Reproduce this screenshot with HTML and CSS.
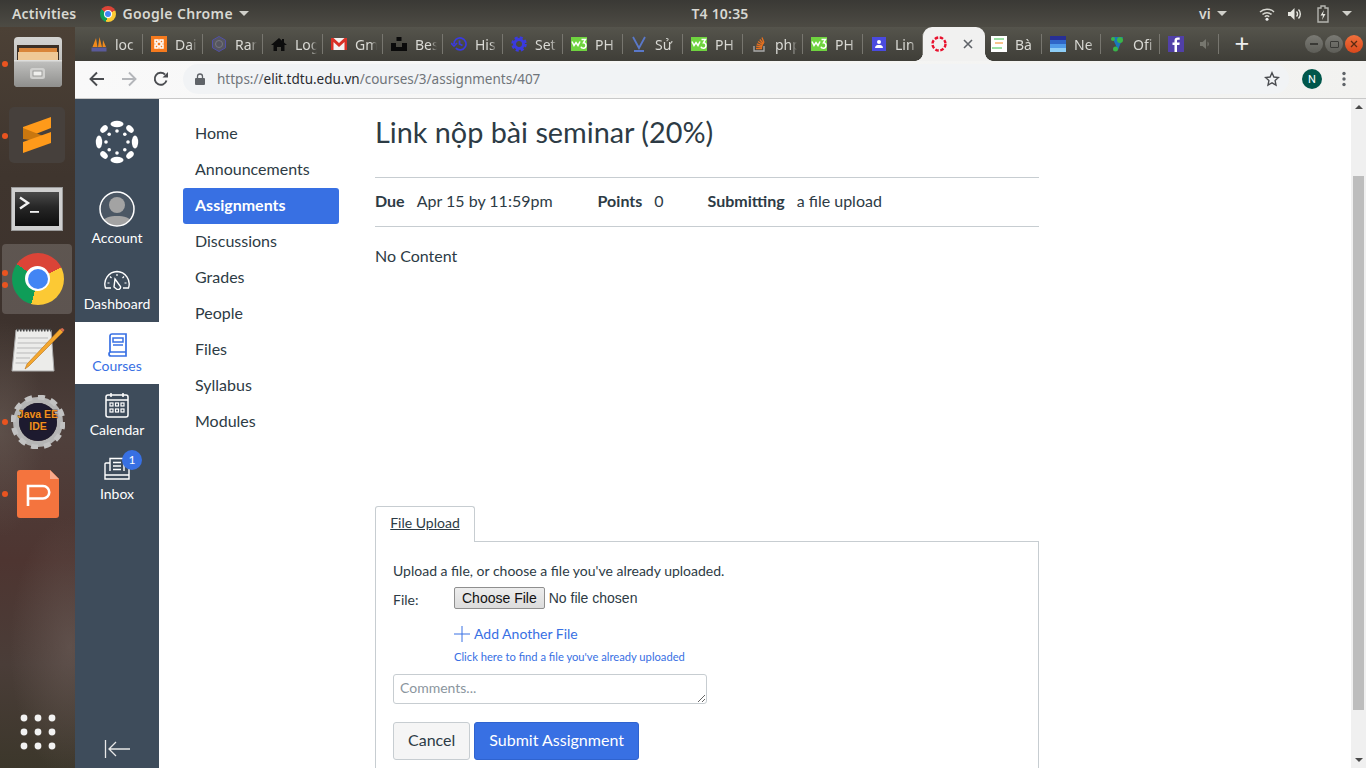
FILE: index.html
```html
<!DOCTYPE html>
<html lang="vi">
<head>
<meta charset="utf-8">
<title>Link nộp bài seminar (20%)</title>
<link rel="stylesheet" href="styles.css">
</head>
<body>
<svg class="defs" width="0" height="0" aria-hidden="true">
  <defs>
    <linearGradient id="cab-top" x1="0" y1="0" x2="0" y2="1"><stop offset="0" stop-color="#d4d4d2"/><stop offset="1" stop-color="#a9a9a7"/></linearGradient>
    <linearGradient id="cab-front" x1="0" y1="0" x2="0" y2="1"><stop offset="0" stop-color="#c2c2c0"/><stop offset="1" stop-color="#8f8f8d"/></linearGradient>
    <linearGradient id="term-bg" x1="0" y1="0" x2="0" y2="1"><stop offset="0" stop-color="#4a4a4a"/><stop offset=".45" stop-color="#262626"/><stop offset="1" stop-color="#0e0e0e"/></linearGradient>
  </defs>
  <symbol id="w3" viewBox="0 0 16 16">
    <rect width="16" height="14" y="1" fill="#6fd43f"/>
    <path d="M1 5.500l2 4 2-3 2 3 2-4" fill="none" stroke="#fff" stroke-width="1.500"/>
    <path d="M10.500 3.500h4l-2 3.200c2 0 2.500 1.200 2.500 2.800s-1 2.700-2.500 2.700-2.300-.6-2.600-1.500" fill="none" stroke="#fff" stroke-width="1.500"/>
  </symbol>
</svg>

<div class="screen">
  <header class="topbar">
    <div class="top-left">
      <span class="activities">Activities</span>
      <span class="chrome-logo chrome-logo-sm"><span class="chrome-ring"><span class="chrome-dot"></span></span></span>
      <span class="app-name">Google Chrome</span>
      <span class="caret"></span>
    </div>
    <div class="clock">T4 10:35</div>
    <div class="top-right">
      <span class="lang">vi</span>
      <span class="caret"></span>
      <svg class="tray wifi" width="16" height="14" viewBox="0 0 16 14"><path d="M1 5a10 10 0 0 1 14 0M3.500 7.500a6.500 6.500 0 0 1 9 0M5.800 9.800a3.200 3.200 0 0 1 4.400 0" fill="none" stroke="#d6d6d0" stroke-width="1.500"/><circle cx="8" cy="12.300" r="1.500" fill="#eee"/></svg>
      <svg class="tray sound" width="16" height="14" viewBox="0 0 16 14"><path d="M1 5h2.500L7.500 1v12l-4-4H1z" fill="#e6e6e0"/><path d="M9.500 4.500a3.500 3.500 0 0 1 0 5M11.500 2.500a6.500 6.500 0 0 1 0 9" fill="none" stroke="#e6e6e0" stroke-width="1.400"/></svg>
      <svg class="tray battery" width="12" height="18" viewBox="0 0 12 18"><path d="M4 1h4v2h3v14H1V3h3z" fill="none" stroke="#b5b5b0" stroke-width="1.400"/><path d="M7 5L3.500 10.500H6L5 15l3.500-6H6z" fill="#e6e6e0"/></svg>
      <span class="caret"></span>
    </div>
  </header>

  <div class="desk">
    <nav class="dock">
      <div class="dock-item dock-files"><span class="run-dot"></span>
        <svg width="50" height="50" viewBox="0 0 50 50"><rect x="1" y="0" width="48" height="50" rx="4" fill="url(#cab-top)"/><rect x="4" y="8" width="42" height="15" fill="#3b2f25"/><rect x="6" y="11" width="38" height="4" fill="#d9853a"/><rect x="5" y="15" width="40" height="8" fill="#efc896"/><path d="M1 23h48v23a4 4 0 0 1-4 4H5a4 4 0 0 1-4-4z" fill="url(#cab-front)"/><rect x="1" y="23" width="48" height="1.500" fill="#dededc"/><rect x="17" y="31" width="15" height="11" rx="2.500" fill="#d0d0ce"/><rect x="20" y="34" width="9" height="5" fill="#efefed" stroke="#8a8a88" stroke-width=".8"/></svg>
      </div>
      <div class="dock-item dock-sublime"><span class="run-dot"></span>
        <svg width="56" height="56" viewBox="0 0 56 56"><rect width="56" height="56" rx="5" fill="#46403c"/><path d="M14 20L42 10v11L14 32z" fill="#ff9a1a"/><path d="M14 21l28 11v4L14 32z" fill="#c9770f"/><path d="M42 25L14 35v11l28-10z" fill="#ff9a1a"/></svg>
      </div>
      <div class="dock-item dock-term">
        <svg width="52" height="44" viewBox="0 0 52 44"><rect x=".5" y=".5" width="51" height="43" fill="#cfcfcf" stroke="#9a9a9a"/><rect x="4" y="5" width="44" height="34" fill="url(#term-bg)"/><path d="M9 10.500l8 5.500-8 5.500" fill="none" stroke="#f2f2f2" stroke-width="2.400"/><rect x="19" y="24" width="9" height="1.800" fill="#f2f2f2"/></svg>
      </div>
      <div class="dock-item dock-active"><span class="run-dot run-dot-a"></span><span class="run-dot run-dot-b"></span>
        <span class="chrome-logo chrome-logo-lg"><span class="chrome-ring"><span class="chrome-dot"></span></span></span>
      </div>
      <div class="dock-item">
        <svg width="54" height="48" viewBox="0 0 54 48"><path d="M5 3h35l3 41H1z" fill="#ececea" stroke="#aaa"/><path d="M6 3h34" stroke="#444" stroke-width="3" stroke-dasharray="1.500 1.500"/><path d="M7 11h30M6.500 16h31M6 21h26M5.500 26h20M5 31h14M4.500 36h12" stroke="#b9b9b9"/><path d="M52 5L18 39l-4 3 2-5L49 2z" fill="#f4a72e" stroke="#b5701a" stroke-width=".6"/><path d="M49 2l3 3 1.500-2-2-2z" fill="#d56c50"/></svg>
      </div>
      <div class="dock-item"><span class="run-dot"></span>
        <svg width="54" height="54" viewBox="0 0 54 54"><circle cx="27" cy="27" r="22" fill="none" stroke="#b5b5b5" stroke-width="6"/><circle cx="27" cy="27" r="25" fill="none" stroke="#c2c2c2" stroke-width="5" stroke-dasharray="7 6"/><circle cx="27" cy="27" r="19" fill="#1d1a2f"/><text class="java-text" x="27" y="23">Java EE</text><text class="java-text" x="27" y="35">IDE</text></svg>
      </div>
      <div class="dock-item"><span class="run-dot"></span>
        <svg width="42" height="48" viewBox="0 0 42 48"><path d="M3 0h30l9 9v36a3 3 0 0 1-3 3H3a3 3 0 0 1-3-3V3a3 3 0 0 1 3-3z" fill="#f4743e"/><path d="M33 0l9 9h-9z" fill="#f9a98a"/><path d="M11 36V16h15a6 6 0 0 1 0 12.500H12" fill="none" stroke="#fff" stroke-width="2.600"/></svg>
      </div>
      <div class="dock-grid">
        <svg width="36" height="36" viewBox="0 0 36 36" fill="#f2f2f2"><circle cx="4" cy="4" r="3.400"/><circle cx="18" cy="4" r="3.400"/><circle cx="32" cy="4" r="3.400"/><circle cx="4" cy="18" r="3.400"/><circle cx="18" cy="18" r="3.400"/><circle cx="32" cy="18" r="3.400"/><circle cx="4" cy="32" r="3.400"/><circle cx="18" cy="32" r="3.400"/><circle cx="32" cy="32" r="3.400"/></svg>
      </div>
    </nav>

    <div class="browser">
      <div class="tabstrip">
        <div class="tab"><svg class="fav" viewBox="0 0 16 16"><path d="M1.500 11L5 2l1.500 9zM7 11l1.500-10 2.500 10zM11.500 11L12 4l3 7z" fill="#f08a1d"/><rect x=".5" y="11.500" width="15" height="4" fill="#5a5a9a"/></svg><span class="tab-title">loc</span></div>
        <div class="tab"><svg class="fav" viewBox="0 0 16 16"><rect width="16" height="16" fill="#f57a1e"/><path d="M4 4h3v2h2V4h3v3h-2v2h2v3H9v-2H7v2H4V9h2V7H4z" fill="none" stroke="#fff" stroke-width="1.500"/></svg><span class="tab-title">Dai</span></div>
        <div class="tab"><svg class="fav" viewBox="0 0 16 16"><path d="M8 .5l6.500 3.700v7.600L8 15.500l-6.500-3.700V4.200z" fill="#55555f" stroke="#5150a8"/><circle cx="8" cy="8" r="3.500" fill="none" stroke="#77777f"/></svg><span class="tab-title">Ran</span></div>
        <div class="tab"><svg class="fav" viewBox="0 0 16 16"><path d="M8 2L0 9h2.500v6H6v-4h4v4h3.500V9H16l-3-2.600V3h-2v1.700z" fill="#0c0c0c"/></svg><span class="tab-title">Log</span></div>
        <div class="tab"><svg class="fav" viewBox="0 0 16 16"><rect y="2" width="16" height="12" fill="#f2f2f2"/><path d="M0 2h2.500L8 7l5.500-5H16v12h-2.500V6L8 11 2.500 6v8H0z" fill="#d93025"/></svg><span class="tab-title">Gm</span></div>
        <div class="tab"><svg class="fav" viewBox="0 0 16 16"><rect x="5.500" y="1" width="5" height="4" fill="#0a0a0a"/><path d="M0 7h5v4h6V7h5v8H0z" fill="#0a0a0a"/></svg><span class="tab-title">Bes</span></div>
        <div class="tab"><svg class="fav" viewBox="0 0 16 16"><path d="M3 8a6 6 0 1 1 1.800 4.200M0 7l3 3 3-3M8.500 4.500V8l3 1.500" fill="none" stroke="#3a3ae0" stroke-width="1.700"/></svg><span class="tab-title">His</span></div>
        <div class="tab"><svg class="fav" viewBox="0 0 16 16"><circle cx="8" cy="8" r="4.500" fill="none" stroke="#3a3ae0" stroke-width="3"/><circle cx="8" cy="8" r="6.500" fill="none" stroke="#3a3ae0" stroke-width="2.500" stroke-dasharray="3 2.100"/></svg><span class="tab-title">Set</span></div>
        <div class="tab"><svg class="fav"><use href="#w3"/></svg><span class="tab-title">PH</span></div>
        <div class="tab"><svg class="fav" viewBox="0 0 16 16"><path d="M2 1l6 11 6-11M3 15h10" fill="none" stroke="#5a78c8" stroke-width="1.800"/></svg><span class="tab-title">Sử</span></div>
        <div class="tab"><svg class="fav"><use href="#w3"/></svg><span class="tab-title">PH</span></div>
        <div class="tab"><svg class="fav" viewBox="0 0 16 16"><path d="M3 10v5h10v-5" fill="none" stroke="#aaa" stroke-width="1.300"/><path d="M5 12.500h6M5.200 10.200l6 .8M5.800 7.800l5.800 2M7 5.500l5 3.200M8.800 3.500l3.800 4.500M11 1.500l2 5.300" stroke="#e8701e" stroke-width="1.300"/></svg><span class="tab-title">php</span></div>
        <div class="tab"><svg class="fav"><use href="#w3"/></svg><span class="tab-title">PH</span></div>
        <div class="tab"><svg class="fav" viewBox="0 0 16 16"><rect x="1" y="1" width="14" height="14" fill="#4a4ae0"/><circle cx="8" cy="6" r="2" fill="#fff"/><path d="M4 12c0-2.500 2-3 4-3s4 .5 4 3z" fill="#fff"/></svg><span class="tab-title">Lin</span></div>
        <div class="tab tab-active"><svg class="fav" viewBox="0 0 16 16"><circle cx="8" cy="8" r="6.500" fill="none" stroke="#e8112d" stroke-width="2.400" stroke-dasharray="3.500 1.600"/></svg><svg class="tab-close" width="10" height="10" viewBox="0 0 10 10"><path d="M1 1l8 8M9 1l-8 8" stroke="#5f6368" stroke-width="1.600"/></svg></div>
        <div class="tab tab-next"><svg class="fav" viewBox="0 0 16 16"><rect width="16" height="16" fill="#fff"/><path d="M3 3h10" stroke="#3ac24a"/><path d="M4 7h8" stroke="#f08a1d"/><path d="M1 12h10" stroke="#3ac24a"/></svg><span class="tab-title">Bà</span></div>
        <div class="tab tab-narrow"><svg class="fav" viewBox="0 0 16 16"><rect width="16" height="4" fill="#272f96"/><rect y="4" width="16" height="4" fill="#2f66c8"/><rect y="8" width="16" height="4" fill="#4f9ae8"/><rect y="12" width="16" height="4" fill="#8dcdf6"/></svg><span class="tab-title">Ne</span></div>
        <div class="tab tab-narrow"><svg class="fav" viewBox="0 0 16 16"><path d="M3 1h11L9 14z" fill="#1b75bc"/><circle cx="4" cy="3" r="2" fill="#39b54a"/><circle cx="11" cy="4" r="3" fill="#39b54a"/><circle cx="6.500" cy="13" r="2.500" fill="#39b54a"/></svg><span class="tab-title">Ofi</span></div>
        <div class="tab tab-narrow"><svg class="fav" viewBox="0 0 16 16"><rect width="16" height="16" fill="#5140a8"/><path d="M9 16V9h2.400l.3-2.500H9V5c0-.8.300-1.200 1.200-1.200h1.500V1.500H9.800C7.500 1.500 6.500 2.700 6.500 4.700v1.800H4.500V9h2v7z" fill="#fff"/></svg><svg class="tab-sound" width="12" height="12" viewBox="0 0 12 12"><path d="M0 4h2.500L6 1v10L2.500 8H0zM7.500 3.500a3 3 0 0 1 0 5" fill="#77776f"/></svg></div>
        <div class="new-tab">+</div>
        <div class="win-buttons">
          <span class="win-btn"><span class="win-min"></span></span>
          <span class="win-btn"><span class="win-max"></span></span>
          <span class="win-btn win-close"><svg width="8" height="8" viewBox="0 0 8 8"><path d="M1 1l6 6M7 1L1 7" stroke="#5a2a12" stroke-width="1.300"/></svg></span>
        </div>
      </div>

      <div class="toolbar">
        <svg class="tool-icon" width="16" height="16" viewBox="0 0 16 16"><path d="M15 8H2M8 1.500L1.500 8 8 14.500" fill="none" stroke="#4a4c50" stroke-width="1.900"/></svg>
        <svg class="tool-icon" width="16" height="16" viewBox="0 0 16 16"><path d="M1 8h13M8 1.500L14.500 8 8 14.500" fill="none" stroke="#b4b6ba" stroke-width="1.900"/></svg>
        <svg class="tool-icon" width="16" height="16" viewBox="0 0 16 16"><path d="M13.500 9.500A6 6 0 1 1 12 3.500" fill="none" stroke="#4a4c50" stroke-width="1.900"/><path d="M9.500 6.500H15V1z" fill="#4a4c50"/></svg>
        <div class="omnibox">
          <svg width="10" height="12" viewBox="0 0 10 12"><path d="M2.500 5V3.500a2.500 2.500 0 0 1 5 0V5" fill="none" stroke="#5f6368" stroke-width="1.300"/><rect y="5" width="10" height="7" rx="1" fill="#5f6368"/></svg>
          <span class="url"><span class="url-dim">https://</span>elit.tdtu.edu.vn<span class="url-dim">/courses/3/assignments/407</span></span>
          <svg class="star" width="16" height="16" viewBox="0 0 16 16"><path d="M8 1.800l1.900 4.200 4.600.5-3.400 3.100.9 4.500-4-2.300-4 2.300.9-4.500L1.500 6.500l4.600-.5z" fill="none" stroke="#4a4c50" stroke-width="1.400"/></svg>
        </div>
        <span class="avatar">N</span>
        <svg class="kebab" width="4" height="16" viewBox="0 0 4 16" fill="#5f6368"><circle cx="2" cy="2.500" r="1.700"/><circle cx="2" cy="8" r="1.700"/><circle cx="2" cy="13.500" r="1.700"/></svg>
      </div>

      <div class="page">
        <aside class="gnav">
          <a class="gnav-logo">
            <svg width="44" height="44" viewBox="0 0 44 44" fill="#fff">
              <ellipse cx="22" cy="4" rx="6.500" ry="3.200"/><ellipse cx="22" cy="40" rx="6.500" ry="3.200"/>
              <ellipse cx="4" cy="22" rx="3.200" ry="6.500"/><ellipse cx="40" cy="22" rx="3.200" ry="6.500"/>
              <ellipse cx="9" cy="9" rx="4.300" ry="3" transform="rotate(-45 9 9)"/><ellipse cx="35" cy="9" rx="4.300" ry="3" transform="rotate(45 35 9)"/>
              <ellipse cx="9" cy="35" rx="4.300" ry="3" transform="rotate(45 9 35)"/><ellipse cx="35" cy="35" rx="4.300" ry="3" transform="rotate(-45 35 35)"/>
              <circle cx="22" cy="11" r="1.800"/><circle cx="22" cy="33" r="1.800"/><circle cx="11" cy="22" r="1.800"/><circle cx="33" cy="22" r="1.800"/>
              <circle cx="14.200" cy="14.200" r="1.800"/><circle cx="29.800" cy="14.200" r="1.800"/><circle cx="14.200" cy="29.800" r="1.800"/><circle cx="29.800" cy="29.800" r="1.800"/>
            </svg>
          </a>
          <a class="gnav-item gnav-account">
            <svg width="36" height="36" viewBox="0 0 36 36"><defs><clipPath id="avatar-clip"><circle cx="18" cy="18" r="16.500"/></clipPath></defs><circle cx="18" cy="18" r="17" fill="#4b5764"/><g clip-path="url(#avatar-clip)" fill="#a3a3a3"><circle cx="18" cy="14" r="8"/><path d="M2 34c1-8 10-9 16-9s15 1 16 9v3H2z"/></g><circle cx="18" cy="18" r="17" fill="none" stroke="#fff" stroke-width="1.500"/></svg>
            <span>Account</span>
          </a>
          <a class="gnav-item gnav-dash">
            <svg width="28" height="20" viewBox="0 0 28 20"><path d="M8 18H2.500A12.500 12.500 0 0 1 14 1.500 12.500 12.500 0 0 1 25.500 18H20" fill="none" stroke="#fff" stroke-width="1.400"/><path d="M12 9l5.500 7.500a2.500 2.500 0 0 1-4 2.500L11 17z" fill="none" stroke="#fff" stroke-width="1.400"/><path d="M14 4v2M7 6.500l1.500 1.500M21 6.500L19.500 8M4.500 13h2M23.500 13h-2" stroke="#fff" stroke-width="1.200"/></svg>
            <span>Dashboard</span>
          </a>
          <a class="gnav-item gnav-current">
            <svg width="20" height="24" viewBox="0 0 20 24"><path d="M3 20V3a2 2 0 0 1 2-2h14v18H4a2 2 0 0 0 0 4h15v-4" fill="none" stroke="#3870e3" stroke-width="1.700"/><rect x="6" y="5" width="10" height="4" fill="none" stroke="#3870e3" stroke-width="1.500"/><path d="M6 12h10" stroke="#3870e3" stroke-width="1.500"/></svg>
            <span>Courses</span>
          </a>
          <a class="gnav-item gnav-cal">
            <svg width="24" height="26" viewBox="0 0 24 26"><rect x="1" y="3" width="22" height="22" rx="2" fill="none" stroke="#fff" stroke-width="1.500"/><path d="M1 8h22M6 1v4M18 1v4" stroke="#fff" stroke-width="1.500"/><g fill="none" stroke="#fff" stroke-width="1.200"><rect x="5" y="11" width="3" height="3"/><rect x="10.500" y="11" width="3" height="3"/><rect x="16" y="11" width="3" height="3"/><rect x="5" y="17" width="3" height="3"/><rect x="10.500" y="17" width="3" height="3"/><rect x="16" y="17" width="3" height="3"/></g></svg>
            <span>Calendar</span>
          </a>
          <a class="gnav-item gnav-inbox">
            <svg width="26" height="24" viewBox="0 0 26 24"><path d="M6 14V1.500h14V14M6 6H2a1 1 0 0 0-1 1v15h24V7a1 1 0 0 0-1-1h-4M1 18h24" fill="none" stroke="#fff" stroke-width="1.400"/><path d="M9 5.500h8M9 9h8M9 12.500h8" stroke="#fff" stroke-width="1.400"/></svg>
            <span>Inbox</span>
            <b class="badge">1</b>
          </a>
          <a class="gnav-collapse">
            <svg width="26" height="18" viewBox="0 0 26 18"><path d="M1.500 0v18M26 9H5M12 2L5 9l7 7" fill="none" stroke="#e8e8e8" stroke-width="1.300"/></svg>
          </a>
        </aside>

        <nav class="course-nav">
          <a>Home</a>
          <a>Announcements</a>
          <a class="active">Assignments</a>
          <a>Discussions</a>
          <a>Grades</a>
          <a>People</a>
          <a>Files</a>
          <a>Syllabus</a>
          <a>Modules</a>
        </nav>

        <main class="content">
          <h1>Link nộp bài seminar (20%)</h1>
          <div class="details">
            <b>Due</b><span class="d-val d-due">Apr 15 by 11:59pm</span>
            <b>Points</b><span class="d-val d-points">0</span>
            <b>Submitting</b><span class="d-val">a file upload</span>
          </div>
          <p class="description">No Content</p>
          <div class="tabs"><a class="upload-tab">File Upload</a></div>
          <form class="upload-box">
            <p class="upload-hint">Upload a file, or choose a file you've already uploaded.</p>
            <div class="file-row">
              <label class="file-label">File:</label>
              <input class="file-input" type="file">
            </div>
            <a class="add-file"><svg width="16" height="16" viewBox="0 0 16 16"><path d="M0 8h16M8 0v16" stroke="#3870e3" stroke-width="1"/></svg>Add Another File</a>
            <a class="find-file">Click here to find a file you've already uploaded</a>
            <textarea class="comments" placeholder="Comments..."></textarea>
            <div class="actions">
              <button class="btn" type="button">Cancel</button>
              <button class="btn btn-primary" type="button">Submit Assignment</button>
            </div>
          </form>
        </main>

        <div class="scrollbar">
          <span class="arrow-up"></span>
          <span class="thumb"></span>
          <span class="arrow-down"></span>
        </div>
      </div>
    </div>
  </div>
</div>
</body>
</html>
```
FILE: styles.css
```css
* { box-sizing: border-box; }
html, body { margin: 0; height: 100%; overflow: hidden; }
body { font-family: "Lato", "Noto Sans", sans-serif; color: #2d3b45; }
.defs { position: absolute; }
a { color: inherit; text-decoration: none; }

.screen { width: 1366px; height: 768px; display: grid; grid-template-rows: 27px 1fr; overflow: hidden; }

/* GNOME top bar */
.topbar {
  display: grid; grid-template-columns: 1fr auto 1fr; align-items: center;
  background: linear-gradient(#3a3935, #4d4b44);
  color: #d8d8d2; font-family: "Noto Sans", sans-serif; font-size: 14px; font-weight: 600;
  letter-spacing: .2px;
}
.top-left { display: flex; align-items: center; padding-left: 12px; }
.activities { margin-right: 24px; }
.app-name { margin-left: 6px; letter-spacing: .35px; }
.top-left .caret { margin-left: 6px; }
.clock { font-size: 14px; padding-left: 74px; }
.top-right { display: flex; align-items: center; justify-content: flex-end; padding-right: 14px; }
.lang { margin-right: 6px; }
.wifi { margin-left: 32px; }
.sound { margin-left: 12px; }
.battery { margin-left: 14px; }
.top-right .caret:last-child { margin-left: 13px; }
.caret { width: 0; height: 0; border: 5px solid transparent; border-top: 5px solid #d0d0ca; border-bottom: 0; }

.desk { display: grid; grid-template-columns: 75px 1fr; min-height: 0; }

/* Ubuntu dock */
.dock {
  display: flex; flex-direction: column; padding-top: 1px; min-height: 0;
  background:
    radial-gradient(ellipse 60px 130px at 70px 620px, rgba(115,100,95,.5), transparent),
    radial-gradient(ellipse 45px 110px at 0 400px, rgba(125,115,105,.3), transparent),
    linear-gradient(#4c4136 0, #3f352e 20%, #3d322d 40%, #4f403c 55%, #4e3531 72%, #4a3d38 86%, #3c372b 100%);
}
.dock-item { position: relative; height: 71.7px; flex: none; display: flex; align-items: center; justify-content: center; }
.dock-files > svg { margin-bottom: 4px; }
.dock-sublime > svg { margin: 0 1px 2px 0; }
.dock-term > svg { margin: 4px 2px 0 0; }
.dock-active::before { content: ""; position: absolute; left: 2px; top: 1px; width: 70px; height: 70px; border-radius: 4px; background: rgba(255,255,255,.17); }
.dock-item > svg, .dock-item > .chrome-logo { position: relative; }
.run-dot { position: absolute; left: 2px; top: 50%; width: 6px; height: 6px; margin-top: -3px; border-radius: 50%; background: #e95420; z-index: 1; }
.run-dot-a { margin-top: -9px; }
.run-dot-b { margin-top: 3px; }
.java-text { font-family: "Liberation Sans", sans-serif; font-size: 10.500px; font-weight: 700; fill: #f09020; stroke: #201008; stroke-width: .5px; paint-order: stroke; text-anchor: middle; }
.dock-grid { margin-top: auto; padding-bottom: 18px; display: flex; justify-content: center; }

.chrome-logo { display: inline-flex; align-items: center; justify-content: center; border-radius: 50%; background: conic-gradient(from -55deg, #db4437 0 118deg, #fcc934 118deg 250deg, #0f9d58 250deg 360deg); }
.chrome-ring { display: flex; align-items: center; justify-content: center; border-radius: 50%; background: #fff; }
.chrome-dot { display: block; border-radius: 50%; background: #4285f4; }
.chrome-logo-lg { width: 52px; height: 52px; }
.chrome-logo-lg .chrome-ring { width: 25px; height: 25px; }
.chrome-logo-lg .chrome-dot { width: 20px; height: 20px; }
.chrome-logo-sm { width: 16px; height: 16px; }
.chrome-logo-sm .chrome-ring { width: 8px; height: 8px; }
.chrome-logo-sm .chrome-dot { width: 6px; height: 6px; }

/* Chrome window */
.browser { display: grid; grid-template-rows: 34px 38px 1fr; min-width: 0; min-height: 0; }
.tabstrip {
  display: flex; align-items: stretch; padding-left: 8px;
  background: linear-gradient(#55544c, #3f3e38);
  font-family: "Noto Sans", sans-serif; font-size: 14px; color: #d9d9d4;
}
.tab { position: relative; width: 60px; flex: none; display: flex; align-items: center; padding-left: 8px; }
.tab::after { content: ""; position: absolute; right: 0; top: 7px; bottom: 7px; width: 1px; background: #77766f; }
.fav { width: 16px; height: 16px; flex: none; }
.tab-title { display: block; width: 22px; margin-left: 8px; overflow: hidden; white-space: nowrap; -webkit-mask-image: linear-gradient(90deg, #000 70%, transparent); mask-image: linear-gradient(90deg, #000 70%, transparent); }
.tab-active { width: 62px; background: #f1f1f0; border-radius: 9px 9px 0 0; }
.tab-active::before, .tab-active::after { content: ""; display: block; position: absolute; top: auto; bottom: 0; width: 8px; height: 8px; background: transparent; }
.tab-active::before { left: -8px; right: auto; background: radial-gradient(circle at 0 0, transparent 7.500px, #f1f1f0 8px); }
.tab-active::after { right: -8px; background: radial-gradient(circle at 100% 0, transparent 7.500px, #f1f1f0 8px); }
.tab-close { margin-left: 16px; }
.tab-next { width: 57px; padding-left: 6px; }
.tab-next .tab-title { width: 24px; }
.tab-narrow { width: 59px; }
.tab-sound { margin-left: 16px; }
.new-tab { width: 46px; text-align: center; font-size: 26px; line-height: 32px; color: #eee; font-weight: 400; }
.win-buttons { margin-left: auto; padding-right: 3px; display: flex; align-items: center; gap: 2px; }
.win-btn { width: 18px; height: 18px; border-radius: 50%; background: linear-gradient(#7a7a74, #5e5e58); display: flex; align-items: center; justify-content: center; }
.win-min { width: 8px; height: 1.500px; background: #3a3a36; }
.win-max { width: 9px; height: 7px; border: 1px solid #3a3a36; border-radius: 1px; }
.win-close { background: linear-gradient(#f0703c, #d9481c); }

.toolbar {
  display: flex; align-items: center; padding: 0 20px 1px 14px;
  background: linear-gradient(90deg, #f9f9f9, #f2f2f0);
  border-bottom: 1px solid #c9c9c9;
}
.tool-icon { margin-right: 16px; flex: none; }
.omnibox {
  flex: 1; height: 30px; margin-left: -2px; display: flex; align-items: center; padding: 0 12px;
  border-radius: 15px; background: #f1f3f5;
}
.url { margin-left: 12px; font-family: "Noto Sans", sans-serif; font-size: 13.500px; color: #2a2c30; white-space: nowrap; }
.url-dim { color: #70757a; }
.star { margin-left: auto; margin-right: -3px; }
.avatar { width: 20px; height: 20px; margin-left: 13px; border-radius: 50%; background: #00574b; color: #fff; font-family: "Roboto", sans-serif; font-size: 11px; display: flex; align-items: center; justify-content: center; flex: none; }
.kebab { margin-left: 20px; flex: none; }

/* Canvas LMS page */
.page { display: flex; min-height: 0; overflow: hidden; background: #fff; font-size: 16px; }
.gnav { width: 84px; flex: none; display: flex; flex-direction: column; background: #3e4c5b; color: #fff; font-size: 14px; }
.gnav-logo { height: 77px; display: flex; align-items: flex-end; justify-content: center; padding-bottom: 12px; flex: none; }
.gnav-item { position: relative; display: flex; flex-direction: column; align-items: center; justify-content: flex-end; padding-bottom: 9px; flex: none; }
.gnav-item span { line-height: 18px; }
.gnav-account { height: 80px; }
.gnav-account svg { margin-bottom: 2px; }
.gnav-dash { height: 66px; }
.gnav-dash svg { margin-bottom: 5px; }
.gnav-current { height: 62px; background: #fff; color: #3870e3; }
.gnav-cal { height: 64px; }
.gnav-cal svg { margin-bottom: 3px; }
.gnav-inbox { height: 64px; }
.gnav-inbox svg { margin-bottom: 4px; }
.badge { position: absolute; left: 47px; top: 2px; width: 20px; height: 20px; border-radius: 50%; background: #3870e3; color: #fff; font-size: 12px; font-weight: 400; text-align: center; line-height: 20px; }
.gnav-collapse { margin-top: auto; padding-bottom: 10px; display: flex; justify-content: center; }

.course-nav { width: 156px; flex: none; margin: 17px 36px 0 24px; display: flex; flex-direction: column; }
.course-nav a { height: 36px; line-height: 34px; padding-left: 12px; border-radius: 3px; color: #2d3b45; }
.course-nav a.active { background: #3870e3; color: #fff; font-weight: 700; }

.content { width: 664px; flex: none; }
h1 { margin: 0; height: 78px; font-size: 28.800px; font-weight: 400; line-height: 66px; }
.details { height: 50px; padding-bottom: 4px; display: flex; align-items: center; border-top: 1px solid #c7cdd1; border-bottom: 1px solid #c7cdd1; }
.details b { font-weight: 700; }
.d-val { margin-left: 12px; }
.d-due { margin-right: 45px; }
.d-points { margin-right: 44px; }
.description { margin: 0; height: 279px; padding-top: 18px; line-height: 22px; }

.tabs { height: 36px; display: flex; position: relative; z-index: 1; }
.upload-tab { width: 100px; height: 36px; padding-top: 7px; text-align: center; font-size: 14px; line-height: 18px; text-decoration: underline; background: #fff; border: 1px solid #c7cdd1; border-bottom: 0; border-radius: 3px 3px 0 0; }
.upload-box { margin-top: -1px; height: 300px; padding: 20px 17px 0; border: 1px solid #c7cdd1; font-size: 14px; display: flex; flex-direction: column; align-items: flex-start; }
.upload-hint { margin: 0; line-height: 18px; }
.file-row { display: flex; align-items: center; margin-top: 7px; }
.file-label { width: 61px; padding-top: 3px; }
.file-input { font-family: "Liberation Sans", sans-serif; font-size: 14px; color: #2d3b45; width: 260px; }
.file-input::file-selector-button { height: 22px; margin-right: 4px; padding: 1px 7px; font: inherit; color: #111; background: linear-gradient(#ededed, #dcdcdc); border: 1px solid #8f8f8f; border-radius: 2px; }
.add-file { display: flex; align-items: center; gap: 4px; margin: 15px 0 0 61px; color: #3870e3; line-height: 20px; }
.find-file { margin: 5px 0 0 61px; color: #3870e3; font-size: 11.200px; line-height: 16px; }
.comments { width: 314px; height: 30px; margin-top: 9px; padding: 4px 6px; border: 1px solid #c7cdd1; border-radius: 3px; font: 14px "Lato", sans-serif; color: #2d3b45; outline: 0; }
.comments::placeholder { color: #8b969e; }
.actions { display: flex; gap: 4px; margin-top: 18px; }
.btn { height: 38px; padding: 0 14px 3px; border: 1px solid #c7cdd1; border-radius: 3px; background: #f5f5f5; color: #2d3b45; font: 16px "Lato", sans-serif; }
.btn-primary { background: #3870e3; border-color: #2f63cf; color: #fff; }

.scrollbar { width: 15px; flex: none; margin-left: auto; position: relative; display: flex; flex-direction: column; align-items: center; background: #f0f0f0; }
.thumb { width: 11px; margin-top: 67px; height: 534px; background: #bdbdbd; }
.arrow-up { margin-top: 6px; width: 0; height: 0; border: 4px solid transparent; border-bottom: 4px solid #4a4a4a; border-top: 0; }
.arrow-down { margin-top: 48px; width: 0; height: 0; border: 4px solid transparent; border-top: 4px solid #4a4a4a; border-bottom: 0; }
```
